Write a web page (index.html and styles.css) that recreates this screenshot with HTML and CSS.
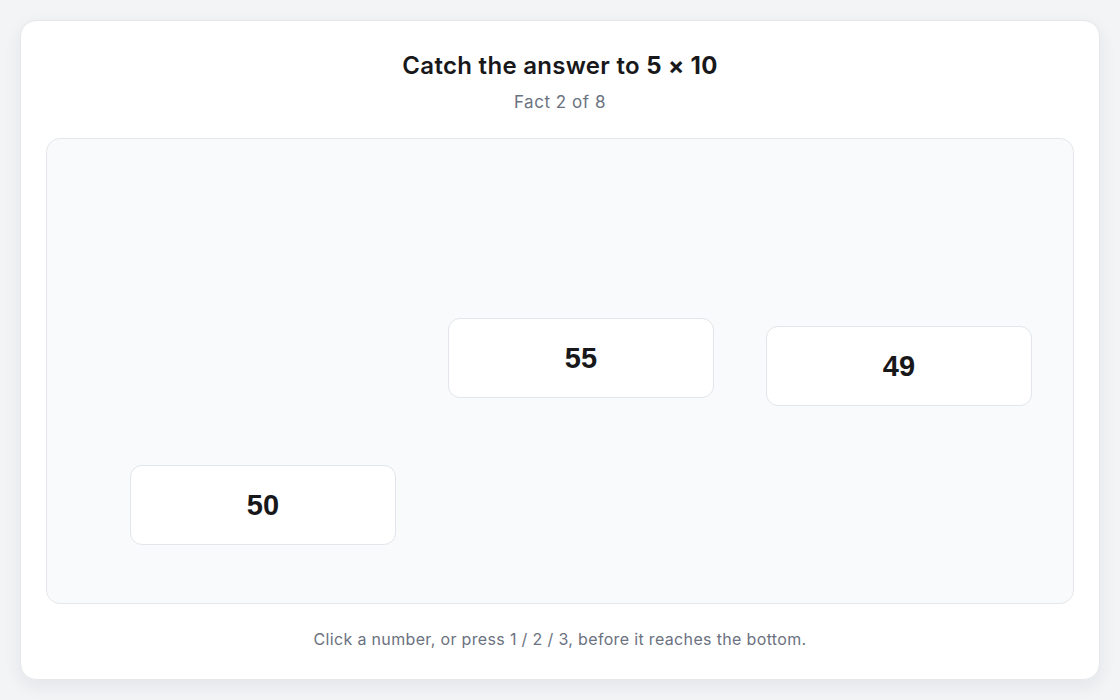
FILE: index.html
```html
<!DOCTYPE html>
<html lang="en">
<head>
<meta charset="utf-8">
<title>Catch the answer</title>
<link rel="stylesheet" href="styles.css">
</head>
<body>
<main class="card">
  <header class="head">
    <h1 class="title">Catch the answer to <strong>5 × 10</strong></h1>
    <p class="sub">Fact 2 of 8</p>
  </header>
  <section class="arena">
    <button class="tile" style="left:401px; top:179px;">55</button>
    <button class="tile" style="left:719px; top:187px;">49</button>
    <button class="tile" style="left:83px; top:326px;">50</button>
  </section>
  <p class="hint">Click a number, or press 1 / 2 / 3, before it reaches the bottom.</p>
</main>
</body>
</html>
```
FILE: styles.css
```css
* { box-sizing: border-box; }
html, body { margin: 0; padding: 0; }
body {
  background: #f3f4f6;
  font-family: Inter, "Noto Sans", "Liberation Sans", sans-serif;
  color: #111827;
  padding: 20px;
  height: 700px;
}
.card {
  background: #ffffff;
  border: 1px solid #e5e7eb;
  border-radius: 16px;
  box-shadow: 0 6px 18px rgba(15, 23, 42, 0.07);
  height: 660px;
  padding: 25px 25px 0;
  display: flex;
  flex-direction: column;
}
.head { text-align: center; }
.title {
  margin: 0;
  font-size: 24px;
  font-weight: 600;
  line-height: 40px;
  color: #18181b;
  letter-spacing: 0.3px;
}
.title strong { font-weight: 700; }
.sub {
  margin: 0;
  margin-top: 1px;
  font-size: 17px;
  line-height: 30px;
  color: #6b7280;
  letter-spacing: 0.55px;
}
.arena {
  position: relative;
  margin-top: 21px;
  height: 466px;
  background: #f8fafc;
  border: 1px solid #e5e7eb;
  border-radius: 14px;
}
.tile {
  position: absolute;
  width: 266px;
  height: 80px;
  background: #ffffff;
  border: 1px solid #e2e5ea;
  border-radius: 12px;
  font-family: "Liberation Sans", Arial, sans-serif;
  font-size: 29px;
  font-weight: 700;
  color: #18181b;
  padding: 0;
  cursor: pointer;
}
.hint {
  margin: 0;
  margin-top: 22px;
  text-align: center;
  font-size: 16px;
  line-height: 26px;
  color: #6b7280;
  letter-spacing: 0.34px;
}
```
